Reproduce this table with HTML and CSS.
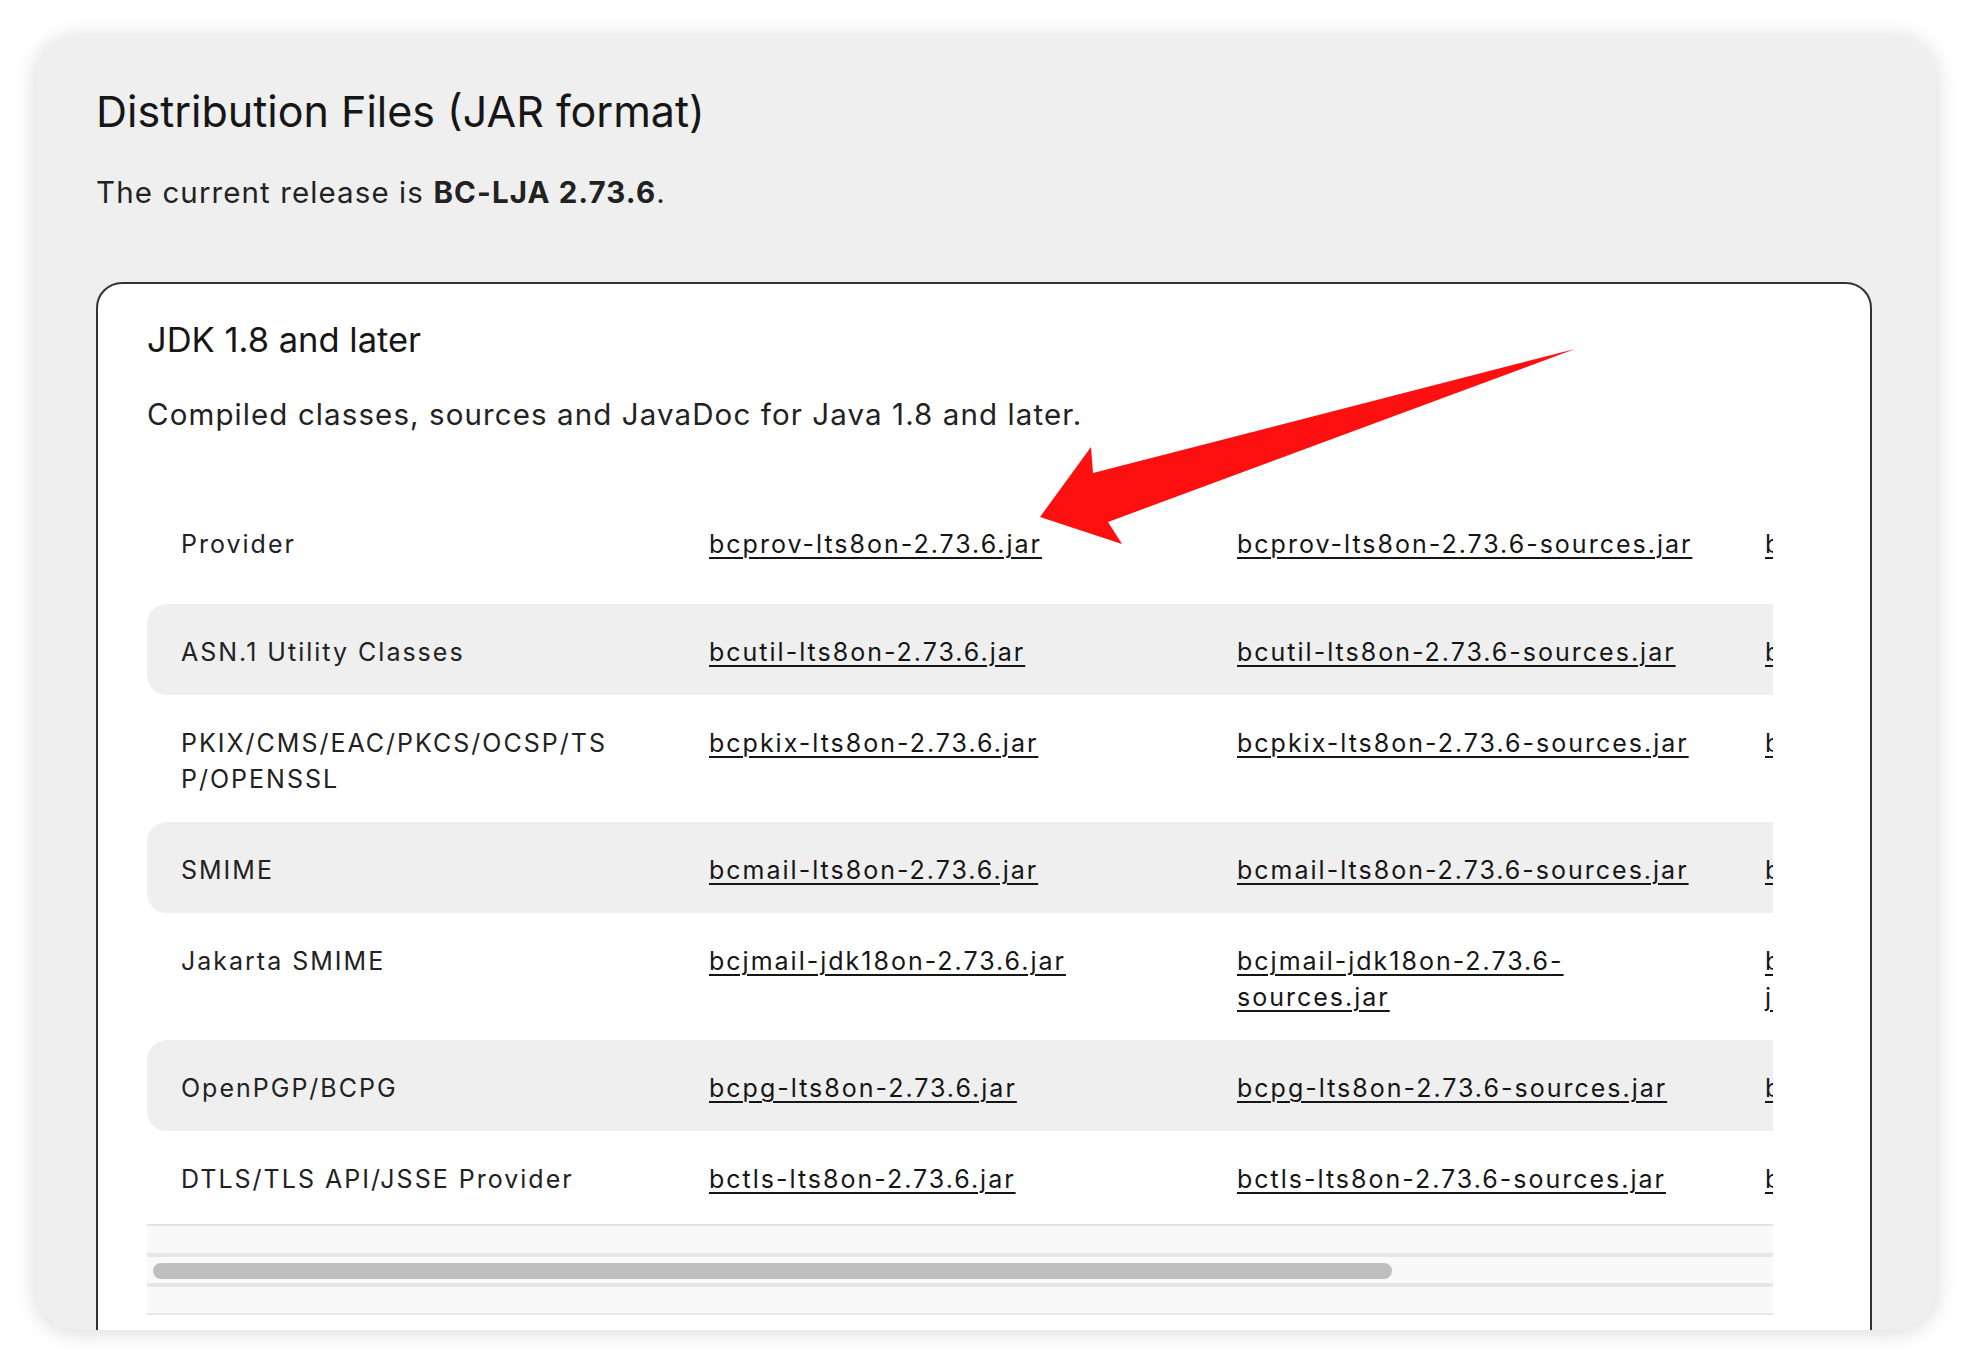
FILE: index.html
```html
<!DOCTYPE html>
<html lang="en">
<head>
<meta charset="utf-8">
<title>Distribution Files</title>
<link rel="stylesheet" href="styles.css">
</head>
<body>
<div class="page">
  <section class="panel">
    <h1 class="panel-title">Distribution Files (JAR format)</h1>
    <p class="release">The current release is <strong>BC-LJA 2.73.6</strong>.</p>
    <div class="jdk-card">
      <h2 class="jdk-title">JDK 1.8 and later</h2>
      <p class="jdk-desc">Compiled classes, sources and JavaDoc for Java 1.8 and later.</p>
      <div class="table-clip">
        <table class="files">
          <tbody>
            <tr class="first">
              <td>Provider</td>
              <td><a href="#">bcprov-lts8on-2.73.6.jar</a></td>
              <td><a href="#">bcprov-lts8on-2.73.6-sources.jar</a></td>
              <td><a href="#">bcprov-lts8on-2.73.6-javadoc.jar</a></td>
            </tr>
            <tr class="alt">
              <td>ASN.1 Utility Classes</td>
              <td><a href="#">bcutil-lts8on-2.73.6.jar</a></td>
              <td><a href="#">bcutil-lts8on-2.73.6-sources.jar</a></td>
              <td><a href="#">bcutil-lts8on-2.73.6-javadoc.jar</a></td>
            </tr>
            <tr>
              <td>PKIX/CMS/EAC/PKCS/OCSP/TSP/OPENSSL</td>
              <td><a href="#">bcpkix-lts8on-2.73.6.jar</a></td>
              <td><a href="#">bcpkix-lts8on-2.73.6-sources.jar</a></td>
              <td><a href="#">bcpkix-lts8on-2.73.6-javadoc.jar</a></td>
            </tr>
            <tr class="alt">
              <td>SMIME</td>
              <td><a href="#">bcmail-lts8on-2.73.6.jar</a></td>
              <td><a href="#">bcmail-lts8on-2.73.6-sources.jar</a></td>
              <td><a href="#">bcmail-lts8on-2.73.6-javadoc.jar</a></td>
            </tr>
            <tr>
              <td>Jakarta SMIME</td>
              <td><a href="#">bcjmail-jdk18on-2.73.6.jar</a></td>
              <td><a href="#">bcjmail-jdk18on-2.73.6-sources.jar</a></td>
              <td><a href="#">bcjmail-jdk18on-2.73.6-javadoc.jar</a></td>
            </tr>
            <tr class="alt">
              <td>OpenPGP/BCPG</td>
              <td><a href="#">bcpg-lts8on-2.73.6.jar</a></td>
              <td><a href="#">bcpg-lts8on-2.73.6-sources.jar</a></td>
              <td><a href="#">bcpg-lts8on-2.73.6-javadoc.jar</a></td>
            </tr>
            <tr>
              <td>DTLS/TLS API/JSSE Provider</td>
              <td><a href="#">bctls-lts8on-2.73.6.jar</a></td>
              <td><a href="#">bctls-lts8on-2.73.6-sources.jar</a></td>
              <td><a href="#">bctls-lts8on-2.73.6-javadoc.jar</a></td>
            </tr>
          </tbody>
        </table>
      </div>
      <div class="hscroll">
        <div class="hscroll-track">
          <div class="hscroll-thumb"></div>
        </div>
      </div>
    </div>
  </section>
</div>
<svg class="annotation" width="1972" height="1366" viewBox="0 0 1972 1366" aria-hidden="true">
  <polygon points="1575,349 1093,473 1091,447 1040,517 1122,544 1108,522" fill="#ff1010"/>
</svg>
</body>
</html>
```

FILE: styles.css
```css
* { box-sizing: border-box; }
html, body { margin: 0; }
body {
  background: #ffffff;
  font-family: Inter, "Noto Sans", "Liberation Sans", sans-serif;
  color: #1c1c1c;
}
.page {
  padding: 36px;
  height: 1366px;
}
.panel {
  height: 1294px;
  background: #efefef;
  border-radius: 40px;
  box-shadow: 0 2px 22px rgba(0, 0, 0, 0.16);
  overflow: hidden;
  padding: 50px 64px 0 60px;
}
.panel-title {
  margin: 0;
  font-size: 43px;
  line-height: 51px;
  font-weight: 400;
  color: #161616;
}
.release {
  margin: 37px 0 0;
  font-size: 29.5px;
  line-height: 36px;
  letter-spacing: 1.1px;
  color: #222222;
}
.release strong { font-weight: 700; }
.jdk-card {
  margin-top: 72px;
  background: #ffffff;
  border: 2px solid #333333;
  border-radius: 26px;
  padding: 35px 0 60px 49px;
}
.jdk-title {
  margin: 0;
  font-size: 34.5px;
  line-height: 41px;
  font-weight: 400;
  color: #161616;
}
.jdk-desc {
  margin: 36px 0 0;
  font-size: 29.5px;
  line-height: 36px;
  letter-spacing: 1.1px;
  color: #222222;
}
.table-clip {
  width: 1626px;
  overflow: hidden;
  margin-top: 67px;
}
.files {
  border-collapse: separate;
  border-spacing: 0;
  table-layout: fixed;
  width: 2112px;
}
.files td {
  width: 528px;
  padding: 30px 32px 25px 34px;
  vertical-align: top;
  font-size: 25px;
  line-height: 36px;
  letter-spacing: 2px;
  color: #222222;
  overflow-wrap: anywhere;
}
.files td:first-child {
  padding-right: 59px;
  word-break: break-all;
}
.files tr.first td {
  padding-top: 27px;
  padding-bottom: 42px;
}
.files tr.alt td { background: #efefef; }
.files tr.alt td:first-child { border-radius: 20px 0 0 20px; }
.files a {
  color: #161616;
  text-decoration: underline;
  text-decoration-thickness: 2px;
  text-underline-offset: 4px;
}
.hscroll {
  width: 1626px;
  margin-top: 2px;
  background: #f9f9f9;
  border-top: 2px solid #e3e3e3;
  border-bottom: 2px solid #e6e6e6;
  padding: 27px 0 26px;
}
.hscroll-track {
  border-top: 4px solid #e6e6e6;
  border-bottom: 4px solid #e6e6e6;
  padding: 6px 6px 4px;
}
.hscroll-thumb {
  width: 1239px;
  height: 16px;
  border-radius: 8px;
  background: #bfbfbf;
}
.annotation {
  position: absolute;
  left: 0;
  top: 0;
  pointer-events: none;
}
```
